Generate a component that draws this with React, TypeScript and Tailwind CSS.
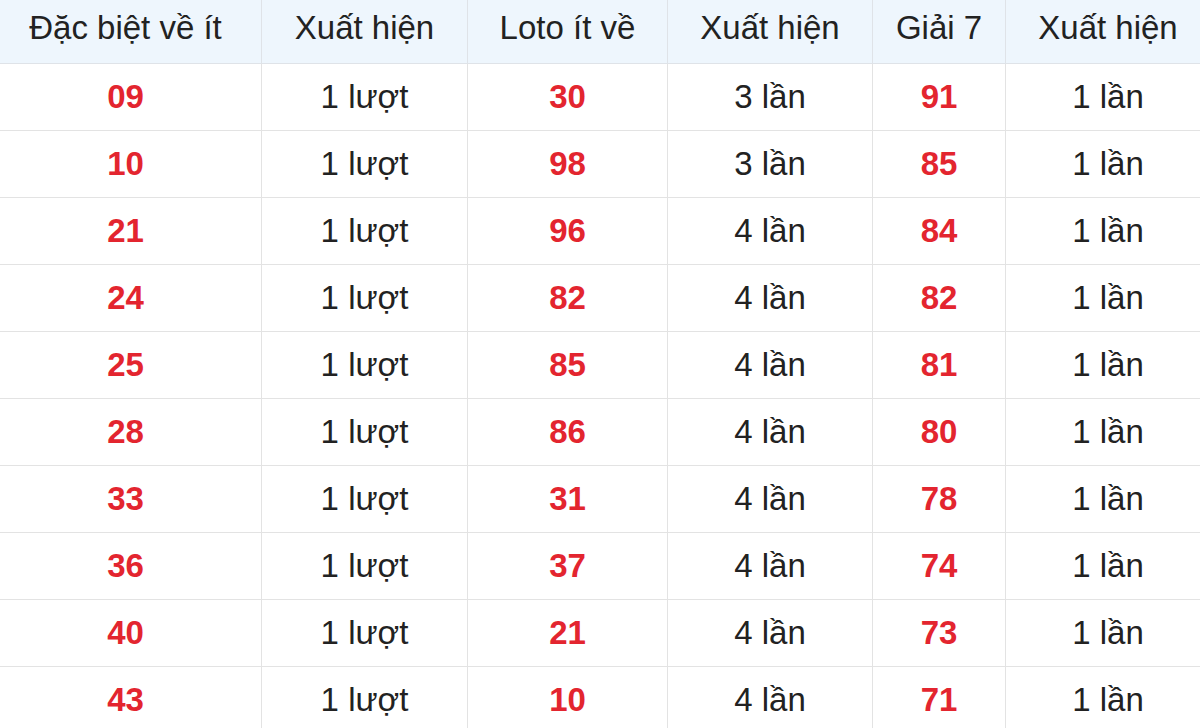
import React from "react";

const rows: [string, string, string, string, string, string][] = [
  ["09", "1 lượt", "30", "3 lần", "91", "1 lần"],
  ["10", "1 lượt", "98", "3 lần", "85", "1 lần"],
  ["21", "1 lượt", "96", "4 lần", "84", "1 lần"],
  ["24", "1 lượt", "82", "4 lần", "82", "1 lần"],
  ["25", "1 lượt", "85", "4 lần", "81", "1 lần"],
  ["28", "1 lượt", "86", "4 lần", "80", "1 lần"],
  ["33", "1 lượt", "31", "4 lần", "78", "1 lần"],
  ["36", "1 lượt", "37", "4 lần", "74", "1 lần"],
  ["40", "1 lượt", "21", "4 lần", "73", "1 lần"],
  ["43", "1 lượt", "10", "4 lần", "71", "1 lần"],
];

const headers = ["Đặc biệt về ít", "Xuất hiện", "Loto ít về", "Xuất hiện", "Giải 7", "Xuất hiện"];

export default function App() {
  return (
    <div
      className="w-[1200px] h-[728px] overflow-hidden bg-white"
      style={{ fontFamily: '"Liberation Sans", Arial, sans-serif' }}
    >
      <div className="w-[1220px] -ml-[10px] -mt-[8px] grid grid-cols-[272px_206px_200px_205px_133px_204px]">
        {headers.map((h, i) => (
          <div
            key={i}
            className={`h-[72px] flex items-center justify-center bg-[#eef6fd] text-[#222] text-[33px] border-b border-[#dfe3e8] ${
              i < 5 ? "border-r" : ""
            }`}
          >
            {h}
          </div>
        ))}
        {rows.map((r, ri) =>
          r.map((c, ci) => (
            <div
              key={`${ri}-${ci}`}
              className={`h-[67px] flex items-center justify-center border-b border-[#e3e3e3] ${
                ci < 5 ? "border-r" : ""
              } ${
                ci % 2 === 0
                  ? "text-[#e3252f] font-bold text-[33px]"
                  : "text-[#222] text-[33px]"
              }`}
            >
              {c}
            </div>
          ))
        )}
      </div>
    </div>
  );
}
